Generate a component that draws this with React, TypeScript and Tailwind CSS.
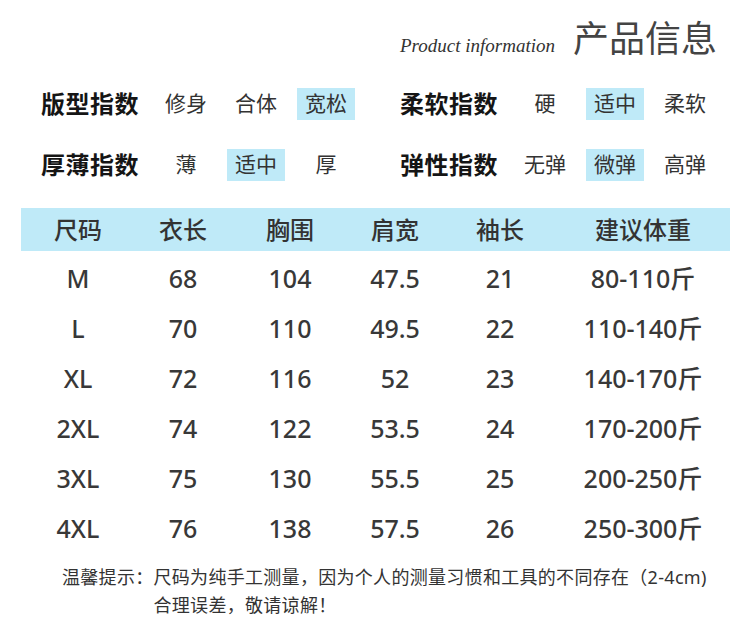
import React from 'react';

const font = "font-['Noto_Sans','Noto_Sans_CJK_SC',sans-serif]";

const indexRows = [
  [
    { label: '版型指数', options: ['修身', '合体', '宽松'], active: 2 },
    { label: '柔软指数', options: ['硬', '适中', '柔软'], active: 1 },
  ],
  [
    { label: '厚薄指数', options: ['薄', '适中', '厚'], active: 1 },
    { label: '弹性指数', options: ['无弹', '微弹', '高弹'], active: 1 },
  ],
];

const headers = ['尺码', '衣长', '胸围', '肩宽', '袖长', '建议体重'];

const rows = [
  ['M', '68', '104', '47.5', '21', '80-110斤'],
  ['L', '70', '110', '49.5', '22', '110-140斤'],
  ['XL', '72', '116', '52', '23', '140-170斤'],
  ['2XL', '74', '122', '53.5', '24', '170-200斤'],
  ['3XL', '75', '130', '55.5', '25', '200-250斤'],
  ['4XL', '76', '138', '57.5', '26', '250-300斤'],
];

const cols = 'grid grid-cols-[114px_96px_118px_92px_118px_168px]';

function IndexGroup({ label, options, active }: { label: string; options: string[]; active: number }) {
  return (
    <div className="flex items-center">
      <div className="w-[110px] text-[24px] font-bold text-[#151515] leading-none tracking-[0.5px]">{label}</div>
      {options.map((o, i) => (
        <div key={i} className="w-[70px] flex justify-center">
          <span
            className={`h-[32px] w-[58px] flex items-center justify-center text-[21px] text-[#333] ${
              i === active ? 'bg-[#bfeaf8]' : ''
            }`}
          >
            {o}
          </span>
        </div>
      ))}
    </div>
  );
}

export default function App() {
  return (
    <div className={`w-[750px] h-[631px] bg-white overflow-hidden ${font}`}>
      {/* Title */}
      <div className="flex justify-end items-baseline pt-[19px] pr-[33px] gap-[18px] h-[62px]">
        <span className="font-['Liberation_Serif',serif] italic text-[19px] text-[#333]">Product information</span>
        <span className="text-[36px] leading-[40px] text-[#444]">产品信息</span>
      </div>

      {/* Index rows */}
      <div className="mt-[22px] flex flex-col gap-[21px]">
        {indexRows.map((pair, r) => (
          <div key={r} className="flex h-[40px] items-center">
            <div className="pl-[41px] w-[400px]">
              <IndexGroup {...pair[0]} />
            </div>
            <IndexGroup {...pair[1]} />
          </div>
        ))}
      </div>

      {/* Size table */}
      <div className="mt-[23px] ml-[21px] w-[709px]">
        <div className={`${cols} h-[43px] items-center bg-[#bfeaf8] text-[24px] font-medium text-[#333]`}>
          {headers.map((h) => (
            <div key={h} className="text-center">{h}</div>
          ))}
        </div>
        <div className="mt-[3px]">
          {rows.map((row) => (
            <div key={row[0]} className={`${cols} h-[50px] items-center text-[25px] font-medium text-[#383838]`}>
              {row.map((c, i) => (
                <div key={i} className="text-center">{c}</div>
              ))}
            </div>
          ))}
        </div>
      </div>

      {/* Note */}
      <div className="mt-[9px] pl-[62px] text-[18px] leading-[28px] text-[#333] tracking-[0.3px]">
        <div className="flex">
          <span className="shrink-0">温馨提示：</span>
          <span>尺码为纯手工测量，因为个人的测量习惯和工具的不同存在（2-4cm)<br />合理误差，敬请谅解！</span>
        </div>
      </div>
    </div>
  );
}
